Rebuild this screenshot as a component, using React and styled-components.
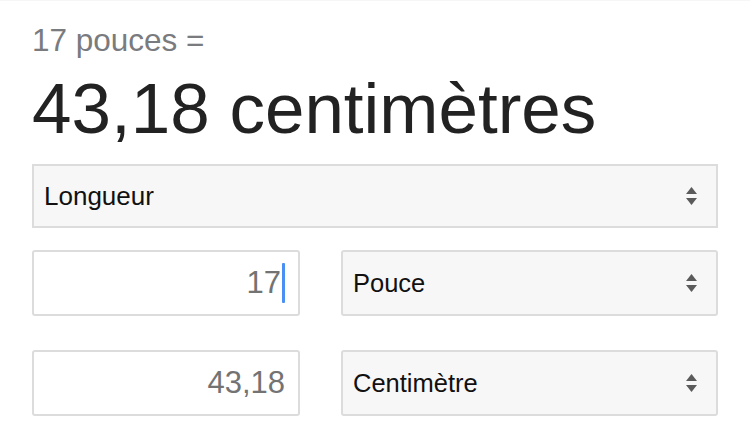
import styled, { createGlobalStyle } from "styled-components";

const GlobalStyle = createGlobalStyle`
  html, body {
    margin: 0;
    padding: 0;
    background: #ffffff;
  }
  body {
    font-family: "Liberation Sans", Arial, Helvetica, sans-serif;
  }
`;

const Converter = styled.div`
  width: 750px;
  height: 448px;
  box-sizing: border-box;
  padding: 22px 32px 0 32px;
  border-top: 1px solid #f6f6f6;
  display: flex;
  flex-direction: column;
`;

const Query = styled.div`
  font-size: 31.5px;
  line-height: 36px;
  color: #7a7b7e;
  margin-top: -1px;
`;

const Result = styled.div`
  font-size: 71px;
  line-height: 80px;
  color: #222222;
  margin-top: 11px;
`;

const Select = styled.div`
  box-sizing: border-box;
  height: ${(p) => p.$h}px;
  margin-top: ${(p) => p.$mt || 0}px;
  flex: ${(p) => (p.$grow ? 1 : "none")};
  display: flex;
  align-items: center;
  justify-content: space-between;
  padding: 0 18px 0 10px;
  background: #f7f7f7;
  border: 2px solid #dcdcdc;
  border-radius: ${(p) => (p.$square ? 0 : 3)}px;
  font-size: ${(p) => p.$fs || 25.5}px;
  color: #111111;
`;

const Row = styled.div`
  display: flex;
  gap: 41px;
  margin-top: ${(p) => p.$mt}px;
  height: 66px;
`;

const Field = styled.div`
  box-sizing: border-box;
  width: 268px;
  height: 100%;
  display: flex;
  align-items: center;
  justify-content: flex-end;
  padding-right: 13px;
  background: #ffffff;
  border: 2px solid #dcdcdc;
  border-radius: 3px;
  font-size: 31px;
  color: #737373;
`;

const Caret = styled.span`
  display: inline-block;
  width: 3px;
  height: 40px;
  margin-left: 1px;
  background: #4a8ff4;
  border-radius: 1px;
`;

function Arrows() {
  return (
    <svg width="13" height="22" viewBox="0 0 13 22">
      <path d="M1 9 L6.5 2 L12 9 Z" fill="#5b5b5b" />
      <path d="M1 13 L6.5 20 L12 13 Z" fill="#5b5b5b" />
    </svg>
  );
}

export default function App() {
  return (
    <>
      <GlobalStyle />
      <Converter>
        <Query>17 pouces =</Query>
        <Result>43,18 centimètres</Result>
        <Select $h={64} $mt={15} $fs={26} $square>
          <span>Longueur</span>
          <Arrows />
        </Select>
        <Row $mt={22}>
          <Field>
            17
            <Caret />
          </Field>
          <Select $h={66} $grow>
            <span>Pouce</span>
            <Arrows />
          </Select>
        </Row>
        <Row $mt={34}>
          <Field>43,18</Field>
          <Select $h={66} $grow>
            <span>Centimètre</span>
            <Arrows />
          </Select>
        </Row>
      </Converter>
    </>
  );
}
